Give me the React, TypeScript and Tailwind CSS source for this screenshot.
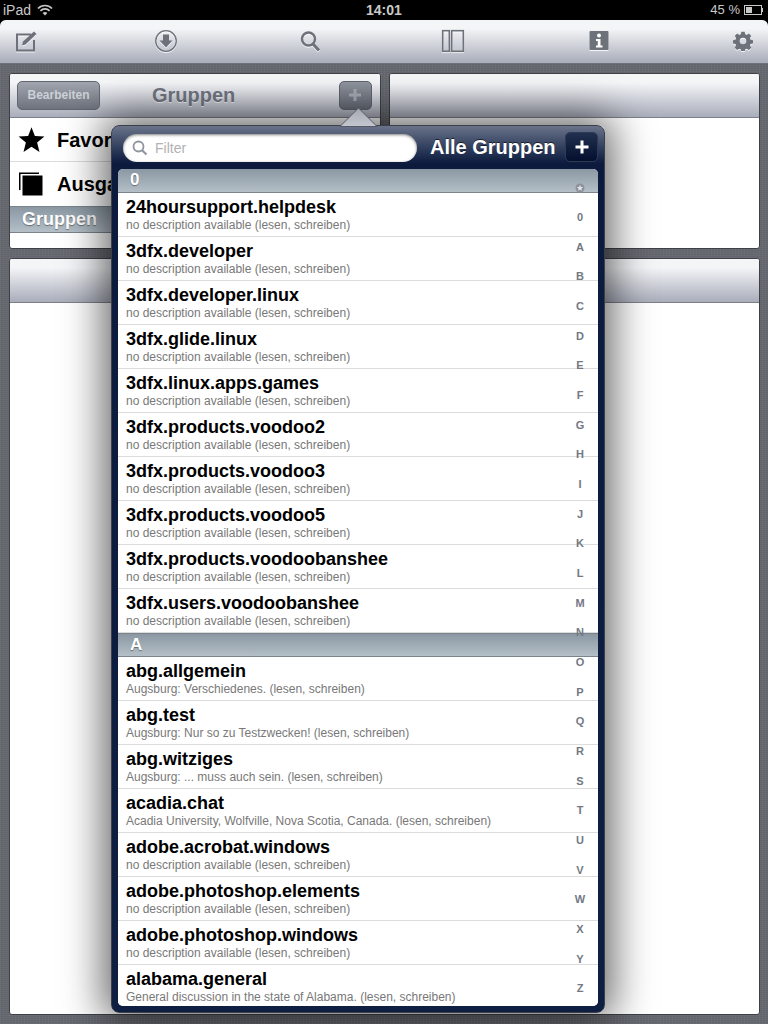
import { ReactNode } from "react";

const rowsZero = [
  "24hoursupport.helpdesk",
  "3dfx.developer",
  "3dfx.developer.linux",
  "3dfx.glide.linux",
  "3dfx.linux.apps.games",
  "3dfx.products.voodoo2",
  "3dfx.products.voodoo3",
  "3dfx.products.voodoo5",
  "3dfx.products.voodoobanshee",
  "3dfx.users.voodoobanshee",
];

const noDesc = "no description available (lesen, schreiben)";

const rowsA = [
  ["abg.allgemein", "Augsburg: Verschiedenes. (lesen, schreiben)"],
  ["abg.test", "Augsburg: Nur so zu Testzwecken! (lesen, schreiben)"],
  ["abg.witziges", "Augsburg: ... muss auch sein. (lesen, schreiben)"],
  ["acadia.chat", "Acadia University, Wolfville, Nova Scotia, Canada. (lesen, schreiben)"],
  ["adobe.acrobat.windows", noDesc],
  ["adobe.photoshop.elements", noDesc],
  ["adobe.photoshop.windows", noDesc],
  ["alabama.general", "General discussion in the state of Alabama. (lesen, schreiben)"],
];

const letters = "0ABCDEFGHIJKLMNOPQRSTUVWXYZ".split("");

const linen =
  "bg-[#666970] bg-[repeating-linear-gradient(90deg,rgba(255,255,255,0.02)_0px,rgba(255,255,255,0.02)_1px,rgba(0,0,0,0.02)_1px,rgba(0,0,0,0.02)_3px),repeating-linear-gradient(0deg,rgba(255,255,255,0.02)_0px,rgba(255,255,255,0.02)_1px,rgba(0,0,0,0.03)_1px,rgba(0,0,0,0.03)_2px)]";

function ToolIcon({ children, w = 24, className = "" }: { children: ReactNode; w?: number; className?: string }) {
  return (
    <svg width={w} height={24} viewBox={`0 0 ${w} 24`} className={`shrink-0 drop-shadow-[0_1px_0_rgba(255,255,255,0.8)] ${className}`}>
      {children}
    </svg>
  );
}

function Toolbar() {
  return (
    <div className="h-[44px] shrink-0 rounded-t-[6px] bg-gradient-to-b from-[#f4f5f7] from-20% to-[#a9adba] flex items-center pl-[14px] pb-[2px] border-b border-[#6f727a]">
      <ToolIcon>
        <path d="M17 5.5H3V21.5H20V11" fill="none" stroke="#6d7179" strokeWidth="2" />
        <path d="M8 16.5L9 12.5L20 2.5L22.5 5L11.5 15.5Z" fill="#6d7179" />
      </ToolIcon>
      <ToolIcon className="ml-[116px]">
        <circle cx="12" cy="12" r="10.3" fill="none" stroke="#6d7179" strokeWidth="1.3" />
        <path d="M9 5.5H15V11.5H18.5L12 18.5L5.5 11.5H9Z" fill="#6d7179" />
      </ToolIcon>
      <ToolIcon className="ml-[120px]">
        <circle cx="10.5" cy="10" r="6.5" fill="none" stroke="#6d7179" strokeWidth="2.4" />
        <path d="M15 15L21 21.5" stroke="#6d7179" strokeWidth="3" />
      </ToolIcon>
      <ToolIcon className="ml-[119px]">
        <rect x="1.7" y="1.7" width="6.6" height="20.6" fill="none" stroke="#6d7179" strokeWidth="1.6" />
        <rect x="10.7" y="1.7" width="11.6" height="20.6" fill="none" stroke="#6d7179" strokeWidth="1.6" />
      </ToolIcon>
      <ToolIcon className="ml-[122px]">
        <rect x="2.5" y="2" width="19" height="19" rx="1" fill="#6d7179" />
        <circle cx="12" cy="6.5" r="2" fill="#fff" />
        <path d="M9 10H13.5V16.5H15.5V18.5H9V16.5H10.8V12H9Z" fill="#fff" />
      </ToolIcon>
      <svg width="20" height="20" viewBox="0 0 24 24" className="ml-[122px] shrink-0 drop-shadow-[0_1px_0_rgba(255,255,255,0.8)]">
        <path
          fillRule="evenodd"
          fill="#6d7179"
          d="M10 1h4l.6 3 1.9.8 2.6-1.7 2.8 2.8-1.7 2.6.8 1.9 3 .6v4l-3 .6-.8 1.9 1.7 2.6-2.8 2.8-2.6-1.7-1.9.8-.6 3h-4l-.6-3-1.9-.8-2.6 1.7-2.8-2.8 1.7-2.6-.8-1.9-3-.6v-4l3-.6.8-1.9-1.7-2.6 2.8-2.8 2.6 1.7 1.9-.8ZM12 8a4 4 0 1 0 0 8 4 4 0 0 0 0-8Z"
        />
      </svg>
    </div>
  );
}

function PanelHeader({ children }: { children?: ReactNode }) {
  return (
    <div className="h-[44px] shrink-0 bg-gradient-to-b from-[#f4f5f7] from-20% to-[#a9adba] border-b border-[#7d8088] relative flex items-center">
      {children}
    </div>
  );
}

function Row({ title, sub }: { title: string; sub: string }) {
  return (
    <div className="h-[44px] bg-white border-b border-[#dcdcdc] pl-[8px] pt-[4px] overflow-hidden">
      <div className="text-[18px] leading-[21px] font-bold text-black whitespace-nowrap">{title}</div>
      <div className="text-[12px] leading-[15px] text-[#787878] whitespace-nowrap">{sub}</div>
    </div>
  );
}

function SectionHead({ label, top }: { label: string; top?: boolean }) {
  return (
    <div
      className={`h-[24px] bg-gradient-to-b from-[#8b98a3] to-[#b4bfc7] border-y border-[#7b838c] pl-[12px] text-[17px] leading-[22px] font-bold text-white [text-shadow:0_1px_1px_rgba(0,0,0,0.4)] ${
        top ? "rounded-t-[4px] border-t-0" : ""
      }`}
    >
      {label}
    </div>
  );
}

function Popover() {
  return (
    <div className="absolute left-[111px] top-[125px] w-[494px] h-[888px] rounded-[8px] bg-gradient-to-b from-[#6a7389] from-0% via-[#0b1a3d] via-[38px] to-[#0e1f42] border border-[#3b3f49] shadow-[0_0_40px_8px_rgba(0,0,0,0.6)]">
      {/* arrow above the popover */}
      <svg width="38" height="20" viewBox="0 0 38 20" className="absolute left-[228px] top-[-19px]">
        <defs>
          <linearGradient id="arrowFill" x1="0" y1="0" x2="0" y2="1">
            <stop offset="0" stopColor="#a4a8b3" />
            <stop offset="1" stopColor="#c4c7cf" />
          </linearGradient>
        </defs>
        <path d="M0 19.5L18.5 1L37 19.5Z" fill="url(#arrowFill)" stroke="#555a66" strokeWidth="1" />
      </svg>

      <div className="flex items-center h-[42px] pl-[11px]">
        <div className="w-[294px] h-[28px] shrink-0 rounded-full bg-white shadow-[inset_0_1px_3px_rgba(0,0,0,0.5)] flex items-center pl-[9px] gap-[7px] mt-[1px]">
          <svg width="16" height="16" viewBox="0 0 16 16">
            <circle cx="6.5" cy="6.5" r="5" fill="none" stroke="#8f959f" strokeWidth="1.8" />
            <path d="M10 10.2L14.5 14.5" stroke="#8f959f" strokeWidth="2.2" />
          </svg>
          <span className="text-[14px] text-[#b2b2b2] mt-[1px]">Filter</span>
        </div>
        <span className="ml-[13px] text-[20px] font-bold text-white whitespace-nowrap [text-shadow:0_-1px_0_rgba(0,0,0,0.6)]">
          Alle Gruppen
        </span>
        <div className="absolute right-[6px] top-[6px] w-[33px] h-[30px] rounded-[5px] bg-gradient-to-b from-[#22304f] to-[#050f2e] border border-[#2f3a55] flex items-center justify-center">
          <svg width="14" height="14" viewBox="0 0 14 14">
            <path d="M7 0.5V13.5M0.5 7H13.5" stroke="#fff" strokeWidth="3" />
          </svg>
        </div>
      </div>

      <div className="absolute left-[6px] top-[43px] w-[480px] h-[837px] rounded-[5px] bg-white overflow-hidden">
        <SectionHead label="0" top />
        {rowsZero.map((r) => (
          <Row key={r} title={r} sub={noDesc} />
        ))}
        <SectionHead label="A" />
        {rowsA.map(([t, s]) => (
          <Row key={t} title={t} sub={s} />
        ))}

        {/* section index */}
        <div className="absolute right-0 top-[5px] bottom-[2px] w-[36px] flex flex-col items-center justify-around text-[11px] leading-none font-bold text-[#737884]">
          <svg width="10" height="10" viewBox="0 0 10 10">
            <circle cx="5" cy="5" r="4.5" fill="#8c919b" />
            <path d="M5 1.8L5.9 4H8.2L6.4 5.4L7 7.7L5 6.4L3 7.7L3.6 5.4L1.8 4H4.1Z" fill="#e4e6ea" />
          </svg>
          {letters.map((l) => (
            <span key={l}>{l}</span>
          ))}
        </div>
      </div>
    </div>
  );
}

function GroupsPanel() {
  return (
    <div className="flex-1 h-[176px] rounded-[3px] bg-white border border-[#3e4046] overflow-hidden flex flex-col">
      <PanelHeader>
        <button className="ml-[7px] w-[83px] h-[29px] rounded-[5px] bg-gradient-to-b from-[#a0a5af] to-[#6e737e] border border-[#62666f] text-[12px] font-bold text-[#cdd0d6] mt-[-1px]">
          Bearbeiten
        </button>
        <span className="ml-[52px] text-[20px] font-bold text-[#6f7581] [text-shadow:0_1px_0_rgba(255,255,255,0.7)] mt-[-1px]">
          Gruppen
        </span>
        <div className="ml-auto mr-[8px] w-[33px] h-[29px] rounded-[5px] bg-gradient-to-b from-[#8f949e] to-[#666b76] border border-[#5f636c] flex items-center justify-center mt-[-1px]">
          <svg width="14" height="14" viewBox="0 0 14 14">
            <path d="M7 1V13M1 7H13" stroke="#a5a9b2" strokeWidth="3" />
          </svg>
        </div>
      </PanelHeader>
      <div className="h-[44px] border-b border-[#dcdcdc] flex items-center pl-[8px] gap-[12px] shrink-0">
        <svg width="27" height="27" viewBox="0 0 24 24" className="shrink-0">
          <path d="M12 1L15 8.8L23.5 9.3L17 14.6L19.1 23L12 18.4L4.9 23L7 14.6L0.5 9.3L9 8.8Z" fill="#000" />
        </svg>
        <span className="text-[20px] font-bold text-black">Favoriten</span>
      </div>
      <div className="h-[44px] flex items-center pl-[9px] gap-[14px] shrink-0">
        <svg width="24" height="24" viewBox="0 0 24 24" className="shrink-0">
          <path d="M0 0.5H20V2H1.5V18H0Z" fill="#000" />
          <rect x="3.5" y="3.5" width="20" height="20" fill="#000" />
        </svg>
        <span className="text-[20px] font-bold text-black">Ausgaben</span>
      </div>
      <div className="h-[27px] shrink-0 bg-gradient-to-b from-[#8b98a3] to-[#b4bfc7] border-y border-[#7b838c] pl-[12px] text-[18px] leading-[24px] font-bold text-white [text-shadow:0_1px_1px_rgba(0,0,0,0.4)]">
        Gruppen
      </div>
    </div>
  );
}

export default function App() {
  return (
    <div className="relative w-[768px] h-[1024px] overflow-hidden bg-black font-['Liberation_Sans',Arial,sans-serif] flex flex-col">
      {/* status bar */}
      <div className="h-[20px] shrink-0 bg-black text-[#c9c9c9] text-[14px] flex items-center justify-between pl-[3px] pr-[5px] relative">
        <div className="flex items-center gap-[6px]">
          <span>iPad</span>
          <svg width="16" height="12" viewBox="0 0 16 12">
            <path d="M1 4.5C5 .5 11 .5 15 4.5M3.4 6.8C6 4.2 10 4.2 12.6 6.8" fill="none" stroke="#c9c9c9" strokeWidth="1.7" />
            <path d="M5.6 9C7 7.6 9 7.6 10.4 9L8 11.5Z" fill="#c9c9c9" />
          </svg>
        </div>
        <span className="absolute left-[366px] font-bold text-[14px]">14:01</span>
        <div className="flex items-center gap-[4px]">
          <span className="text-[13px]">45 %</span>
          <div className="flex items-center">
            <div className="w-[18px] h-[10px] border border-[#c9c9c9] p-[1px]">
              <div className="h-full w-[45%] bg-[#c9c9c9]" />
            </div>
            <div className="w-[1px] h-[4px] bg-[#c9c9c9]" />
          </div>
        </div>
      </div>

      <div className={`flex-1 flex flex-col rounded-t-[6px] ${linen}`}>
        <Toolbar />
        <div className="flex-1 flex flex-col gap-[9px] pl-[9px] pr-[8px] pt-[9px] pb-[9px]">
          <div className="flex gap-[8px]">
            <GroupsPanel />
            <div className="flex-1 h-[176px] rounded-[3px] bg-white border border-[#3e4046] overflow-hidden">
              <PanelHeader />
            </div>
          </div>
          <div className="flex-1 rounded-[3px] bg-white border border-[#3e4046] overflow-hidden">
            <PanelHeader />
          </div>
        </div>
      </div>

      <Popover />
    </div>
  );
}
